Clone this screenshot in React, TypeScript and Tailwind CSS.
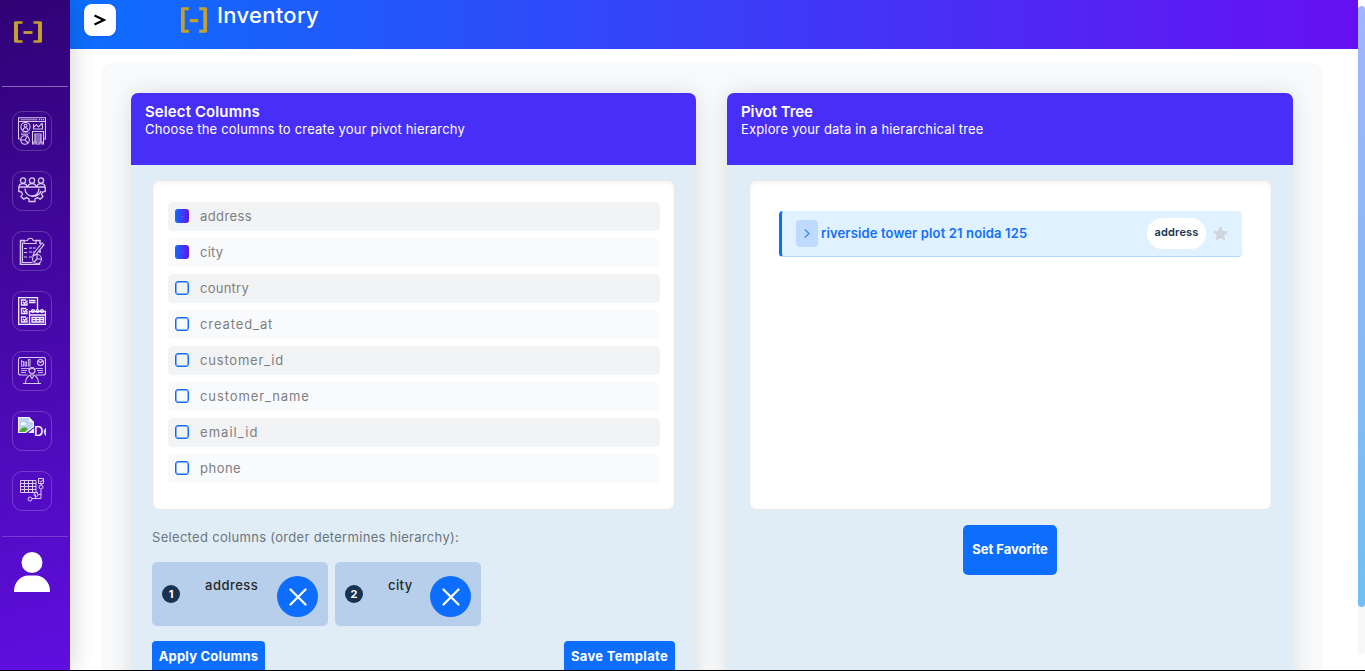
import React from "react";

const columns = [
  { name: "address", on: true, track: "tracking-[0.4px]" },
  { name: "city", on: true, track: "tracking-[0.2px]" },
  { name: "country", on: false, track: "tracking-[0.25px]" },
  { name: "created_at", on: false, track: "tracking-[0.9px]" },
  { name: "customer_id", on: false, track: "tracking-[0.8px]" },
  { name: "customer_name", on: false, track: "tracking-[0.9px]" },
  { name: "email_id", on: false, track: "tracking-[1.050px]" },
  { name: "phone", on: false, track: "tracking-[0.5px]" },
];

function Brackets({ className }: { className: string }) {
  return (
    <svg className={className} viewBox="0 0 30 22" preserveAspectRatio="none" fill="none" stroke="#c3a12f">
      <path d="M9.500 1.500H3V20.500H9.500M20.500 1.500H27V20.500H20.500" strokeWidth="2.600" />
      <path d="M3 1v20M27 1v20" strokeWidth="4" />
      <path d="M10.500 11.500h9" strokeWidth="2.800" />
    </svg>
  );
}

const line = { fill: "none", stroke: "#d9ccf0", strokeWidth: 1.1 };

function DashboardIcon() {
  return (
    <svg className="size-7" viewBox="0 0 28 28" {...line}>
      <path d="M.5 22V.8h27V22h-2M.5 22h2M.5 4.500h27" />
      <path d="M2.500 2.600h17" strokeWidth="1.600" opacity=".6" />
      <path d="M21 2.600h5" strokeDasharray="1.200 .8" />
      <circle cx="7.500" cy="10" r="4.600" />
      <path d="M5.200 13c0-3 4.600-3 4.600 0" />
      <circle cx="7.500" cy="8.700" r="1.400" />
      <path d="M3 16h9M3 17.600h7" opacity=".7" />
      <circle cx="7" cy="23" r="4.300" />
      <path d="M10 18.500 7 23l3 3M7 23H3" />
      <path d="M15.500 7v5h9V7M16 10l2.500-2.500 2 2.500 4-4" />
      <path d="M14.500 14.500h11V27h-1.500v-2h-2v2h-4v-2h-2v2h-1.500zM17 17h6v8h-6zM17 19h6M17 21h6M17 23h6" />
    </svg>
  );
}

function TeamIcon() {
  return (
    <svg className="size-7" viewBox="0 1.5 28 28" {...line} strokeWidth={1.3}>
      <circle cx="5" cy="5" r="2.600" />
      <circle cx="14" cy="5" r="2.600" />
      <circle cx="23" cy="5" r="2.600" />
      <path d="M1 11.500c0-4.500 8-4.500 8 0zM10 11.500c0-4.500 8-4.500 8 0zM19 11.500c0-4.500 8-4.500 8 0z" />
      <path d="M.8 11.500v4.500l2.700.6 1 2.200-1.500 2.400 2.800 2.400 2.700-1.500 2.500 1.400V26h6v-2.500l2.500-1.400 2.700 1.500 2.800-2.400-1.500-2.400 1-2.200 2.700-.6v-4.500" />
      <path d="M7 13c0 10 14 10 14 0M13 20.500c4.500 1 9-1 10-5M17 20.500l3-2" />
    </svg>
  );
}

function TaskIcon() {
  return (
    <svg className="size-7" viewBox="0 0 28 28" {...line}>
      <path d="M7 3.500H2.500v24h19v-2M17 3.500h5V7M22 13v3" strokeWidth="1.500" />
      <path d="M4.500 5.500v20h10M6 6.500h12V4l-3-.5c0-3-5-3-5.500 0L6 4z" />
      <path d="M6 11.500h3M11 11h7M6 15.500h3M11 15h6M6 20h3M11 20h3" strokeDasharray="3 .8" />
      <path d="M16 16l8-10 2 1.700-8 9.800-3 1z" />
      <circle cx="19" cy="22" r="4.500" />
      <path d="M19 17.500V22h4.500M19 22l-3 3" />
    </svg>
  );
}

function ScheduleIcon() {
  return (
    <svg className="size-7" viewBox="0 0 28 28" fill="none" stroke="#f5f0fc" strokeWidth="1.300">
      <path d="M19.500 12V.7H.7v26.600H12M11 3.500h6.500M11 5.500h6.500" />
      <path d="M9 5.500V8H3.500V3H8M5 5l1.500 1.500L9.500 3.500M9 14v2.500H3.500v-5H8M5 13.500 6.500 15l3-3M9 22.500V25H3.500v-5H8M5 22l1.500 1.500 3-3" />
      <path d="M11.500 14.500h16v12.800h-16zM11.500 18h16" />
      <circle cx="15" cy="14" r="1.400" />
      <circle cx="19.500" cy="14" r="1.400" />
      <circle cx="24" cy="14" r="1.400" />
      <path d="M14 20.500h11.500v4.500H14zM18 20v5M21.800 20v5M14 22.700h11" />
    </svg>
  );
}

function MonitorIcon() {
  return (
    <svg className="size-7" viewBox="0 0 28 28" {...line}>
      <path d="M9.500 18H2.500a2 2 0 0 1-2-2V2.500a2 2 0 0 1 2-2h23a2 2 0 0 1 2 2V16a2 2 0 0 1-2 2H18" />
      <path d="M3.500 3v6h2V4.500h-2M7 9V5h1.500v4zM10.500 9V2.500H12V9zM3 11.500h8M3 13.500h6M3 15.500h5M17.500 11.500H25M19 13.500h6M20 15.500h5" opacity=".85" />
      <circle cx="22.500" cy="5.500" r="3" />
      <path d="M20 4l2.500 1.500L25 3.500" />
      <circle cx="14" cy="13.500" r="3" />
      <path d="M11 13c1-2 5-2 6 0M7.500 26c0-11 13-11 13 0M5 26.500h18M12 18.500l2 3 2-3" />
    </svg>
  );
}

function BrokenImage() {
  return (
    <div className="flex h-7 w-7 overflow-hidden">
      <svg className="size-4 shrink-0" viewBox="0 0 16 16">
        <path d="M0 0h11l5 5v5L8 16H0z" fill="#f2f5fa" />
        <path d="M1 1h10v4h4v4l-7 6H1z" fill="#bdd3f3" />
        <path d="M3 6.500c0-2 2.500-2 2.800-.8C8 5 8.500 8 6.500 8H4C2.500 8 2.300 6.800 3 6.500z" fill="#fff" />
        <path d="M1 15c2-5 6-6 9-3l-3 3z" fill="#51a836" />
        <path d="M11 0v5h5zM10 16h6v-5z" fill="#f2f5fa" />
      </svg>
      <span className="pt-[6px] text-[13px] leading-4 font-medium text-white">Default</span>
    </div>
  );
}

function TableTreeIcon() {
  return (
    <svg className="size-7" viewBox="0 0 28 28" {...line} strokeWidth={1}>
      <path d="M2.500 3.500H18v12H2.500zM2.500 6.500H18M2.500 9.500H18M2.500 12.500H18M6.500 3.500v12M10.500 3.500v12M14.500 3.500v12" />
      <path d="M20.500 1.500h5v5h-5zM21.500 4l1.500 1.200L25 2.500M23 6.500v2M23 12.500v9H14M16 15.500h4M20 17.500h3M17.500 17.500v4" />
      <circle cx="23" cy="10" r="2" />
      <circle cx="18" cy="17.500" r="2" />
      <circle cx="12" cy="22" r="2" />
    </svg>
  );
}

const nav = [DashboardIcon, TeamIcon, TaskIcon, ScheduleIcon, MonitorIcon, BrokenImage, TableTreeIcon];

function Sidebar() {
  return (
    <aside className="z-10 flex h-full w-[70px] shrink-0 flex-col bg-[linear-gradient(165deg,#2f0274_0%,#5f0fe0_100%)] shadow-[4px_0_20px_rgba(0,0,0,0.15)]">
      <div className="flex h-[86px] pt-[21px] pl-[13px]">
        <Brackets className="h-[22px] w-[30px]" />
      </div>
      <div className="mx-[2px] h-px bg-white/40" />
      <nav className="mt-6 flex flex-col gap-5 pl-3">
        {nav.map((Icon, i) => (
          <div key={i} className="flex size-10 items-center justify-center rounded-[10px] border border-white/20">
            <Icon />
          </div>
        ))}
      </nav>
      <div className="mx-[2px] mt-[25px] h-px bg-white/20" />
      <svg className="mt-[15px] ml-[14px] h-10 w-9" viewBox="0 0 36 40" fill="#fff">
        <circle cx="18" cy="10.500" r="10.500" />
        <path d="M0 40v-1c0-9 7-15.500 14-15.500h8c7 0 14 6.500 14 15.500v1z" />
      </svg>
    </aside>
  );
}

function Card({ title, subtitle, sub, head, width, children }: { title: string; subtitle: string; sub: string; head: string; width: string; children: React.ReactNode }) {
  return (
    <section className={`flex h-[640px] shrink-0 flex-col rounded-[7px] bg-[#e0edf6] shadow-[0_0_25px_rgba(0,0,0,0.12)] ${width}`}>
      <header className="h-[72px] shrink-0 rounded-t-[7px] bg-[#482ff7] pt-[10px] pl-[14px] whitespace-nowrap text-white">
        <h2 className={`text-[15px] leading-[18px] font-semibold ${head}`}>{title}</h2>
        <p className={`text-[13px] leading-[17px] ${sub}`}>{subtitle}</p>
      </header>
      {children}
    </section>
  );
}

function Chip({ n, label, width, track }: { n: number; label: string; width: string; track: string }) {
  return (
    <div className={`flex h-16 rounded-[5px] bg-[#b8cfeb] pl-[10px] ${width}`}>
      <span className="mt-[23px] flex size-[18px] items-center justify-center rounded-full bg-[#17334f] text-[11px] leading-none font-bold text-white">{n}</span>
      <span className={`mt-[14px] ml-[25px] text-[13px] leading-[18px] font-medium text-[#24282c] ${track}`}>{label}</span>
      <span className="mt-[14px] mr-[10px] ml-auto flex size-[41px] items-center justify-center rounded-full bg-[#0d6efd]">
        <svg className="size-[18px]" viewBox="0 0 18 18" stroke="#fff" strokeWidth="2.200" strokeLinecap="round">
          <path d="M1.500 1.500l15 15M16.500 1.500l-15 15" />
        </svg>
      </span>
    </div>
  );
}

export default function App() {
  return (
    <div className="flex h-[671px] w-[1365px] flex-col overflow-hidden border-b border-black bg-white font-[Inter,sans-serif]">
      <div className="flex h-[670px]">
        <Sidebar />
        <div className="flex w-[1288px] shrink-0 flex-col overflow-hidden">
          <header className="flex h-[49px] shrink-0 bg-[linear-gradient(90deg,#0d6efd,#6610f2)] pl-[14px]">
            <button className="mt-1 flex size-8 items-center justify-center rounded-lg bg-white shadow">
              <svg className="h-3 w-3" viewBox="0 0 12 12" fill="none" stroke="#000" strokeWidth="2.300">
                <path d="M.5 1.500 10 6 .5 10.500" />
              </svg>
            </button>
            <Brackets className="mt-[7px] ml-[64px] h-[26px] w-[28px]" />
            <h1 className="ml-[9px] text-[22px] leading-[30px] font-medium tracking-[0.3px] text-white">Inventory</h1>
          </header>
          <main className="mt-[14px] mr-[35px] ml-[31px] flex gap-[31px] rounded-t-xl bg-[#f8fafc] px-[30px] pt-[30px]">
            <Card title="Select Columns" subtitle="Choose the columns to create your pivot hierarchy" head="tracking-[0.1px]" sub="tracking-[0.2px]" width="w-[565px]">
              <div className="mr-[21px] ml-[21px] mt-[15px] flex h-[330px] shrink-0 flex-col gap-[7px] rounded-[7px] border border-[#e2e8ee] bg-white pr-[14px] pl-[15px] pt-[21px] shadow-[inset_0_2px_4px_rgba(0,0,0,0.05)]">
                {columns.map((c, i) => (
                  <label key={c.name} className={`flex h-[29px] items-center rounded-[5px] pb-px pl-[7px] ${i % 2 ? "bg-[#f9fafc]" : "bg-[#f2f3f5]"}`}>
                    {c.on ? (
                      <span className="flex size-[14px] items-center justify-center rounded-[3px] bg-[linear-gradient(90deg,#0d6efd,#6610f2)]">
                        <span className="size-px bg-white/30" />
                      </span>
                    ) : (
                      <span className="size-[14px] rounded-[3px] border border-[#0d6efd] shadow-[inset_0_0_0_0.5px_#0d6efd]" />
                    )}
                    <span className={`-mt-px ml-[11px] text-[13px] leading-5 text-[#7d7f81] ${c.track}`}>{c.name}</span>
                  </label>
                ))}
              </div>
              <p className="mt-[17px] ml-[21px] text-[13px] leading-5 tracking-[0.31px] text-[#6c757d]">Selected columns (order determines hierarchy):</p>
              <div className="mt-[15px] ml-[21px] flex gap-[7px]">
                <Chip n={1} label="address" width="w-[176px]" track="tracking-[0.5px]" />
                <Chip n={2} label="city" width="w-[146px]" track="tracking-[0.4px]" />
              </div>
              <div className="mx-[21px] mt-[15px] flex justify-between text-[13px] font-bold text-white">
                <button className="h-[33px] w-[113px] rounded-[4px] bg-[#0d6efd] pb-[2px] tracking-[0.2px] whitespace-nowrap">Apply Columns</button>
                <button className="h-[33px] w-[111px] rounded-[4px] bg-[#0d6efd] pb-[2px] tracking-[0.3px] whitespace-nowrap">Save Template</button>
              </div>
            </Card>
            <Card title="Pivot Tree" subtitle="Explore your data in a hierarchical tree" head="tracking-[-0.1px]" sub="tracking-[0.160px]" width="w-[566px]">
              <div className="mr-[21px] ml-[22px] mt-[15px] h-[330px] shrink-0 rounded-[7px] border border-[#e2e8ee] bg-white px-[29px] pt-[30px] shadow-[inset_0_2px_4px_rgba(0,0,0,0.05)]">
                <div className="flex h-[46px] items-center rounded-[4px] border-b border-l-[3px] border-b-[#b4d9f8] border-l-[#0d6efd] bg-[#e0f2ff] pl-[14px]">
                  <span className="flex h-[27px] w-[22px] items-center justify-center rounded-[4px] bg-[#bedbff]">
                    <svg className="h-[9px] w-[6px]" viewBox="0 0 6 9" fill="none" stroke="#3b82f6" strokeWidth="1.200">
                      <path d="M.8.5 5 4.500.8 8.500" />
                    </svg>
                  </span>
                  <span className="ml-[3px] text-[13px] font-semibold tracking-[0.14px] whitespace-nowrap text-[#126ffb]">riverside tower plot 21 noida 125</span>
                  <span className="ml-auto flex h-[31px] w-[59px] justify-center rounded-full bg-white pt-[6px] text-[11px] leading-4 font-semibold tracking-[0.2px] text-[#17334f]">address</span>
                  <svg className="mr-[14px] ml-[7px] size-[15px]" viewBox="0 0 24 24" fill="#d1d5db" stroke="#d1d5db" strokeWidth="2" strokeLinejoin="round">
                    <path d="M12 2l3.100 6.600 7 .9-5.100 5 1.300 7.200L12 18.200l-6.300 3.500L7 14.500l-5.100-5 7-.9z" />
                  </svg>
                </div>
              </div>
              <button className="mt-[15px] h-[50px] w-[94px] self-center rounded-[5px] bg-[#0d6efd] text-[13px] font-bold whitespace-nowrap text-white">Set Favorite</button>
            </Card>
          </main>
        </div>
        <div className="h-[655px] w-[7px] rounded-b bg-[#f8f8f8]">
          <div className="h-[6px] bg-white" />
          <div className="h-[601px] rounded bg-[linear-gradient(180deg,#a0b4ff,#70bff5)]" />
        </div>
      </div>
    </div>
  );
}
